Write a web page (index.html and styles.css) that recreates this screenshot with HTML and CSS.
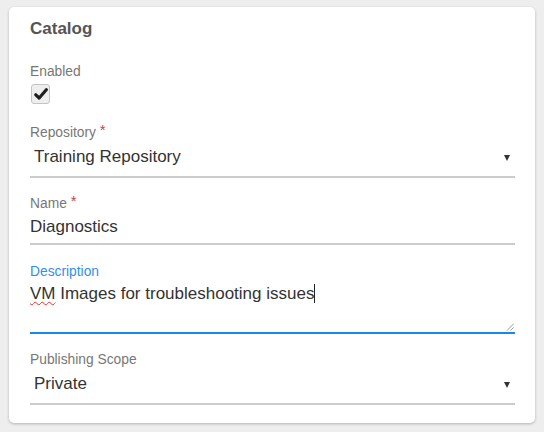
FILE: index.html
```html
<!DOCTYPE html>
<html>
<head>
<meta charset="utf-8">
<link rel="stylesheet" href="styles.css">
</head>
<body>
<div class="card">
  <h2 class="title">Catalog</h2>

  <div class="field field-check">
    <div class="label">Enabled</div>
    <div class="checkbox">
      <svg width="14" height="14" viewBox="0 0 14 14"><path d="M1.8 7.8 L5.2 11 L12.3 2.8" fill="none" stroke="#1e1e1e" stroke-width="3.2" stroke-linecap="round" stroke-linejoin="round"/></svg>
    </div>
  </div>

  <div class="field">
    <div class="label">Repository <span class="req">*</span></div>
    <div class="control select">
      <span class="value">Training Repository</span>
      <span class="arrow"></span>
    </div>
  </div>

  <div class="field field-name">
    <div class="label">Name <span class="req">*</span></div>
    <div class="control input">
      <span class="value">Diagnostics</span>
    </div>
  </div>

  <div class="field field-desc">
    <div class="label label-active">Description</div>
    <div class="control textarea">
      <span class="value"><span class="spell">VM</span> Images for troubleshooting issues<span class="caret"></span></span>
      <svg class="grip" width="8" height="8" viewBox="0 0 8 8"><path d="M7.5 1 L1 7.5 M7.5 4.5 L4.5 7.5" stroke="#999" stroke-width="1"/></svg>
    </div>
  </div>

  <div class="field">
    <div class="label">Publishing Scope</div>
    <div class="control select">
      <span class="value">Private</span>
      <span class="arrow"></span>
    </div>
  </div>
</div>
</body>
</html>
```

FILE: styles.css
```css
html, body {
  margin: 0;
  padding: 0;
}
body {
  background: #eeeeee;
  font-family: "Liberation Sans", Arial, sans-serif;
  width: 544px;
  height: 432px;
  overflow: hidden;
}
.card {
  box-sizing: border-box;
  margin: 7px 0 0 9px;
  width: 526px;
  height: 416px;
  background: #ffffff;
  border-radius: 5px;
  box-shadow: 0 1px 3px rgba(0, 0, 0, 0.25);
  padding: 12px 20px 0 21px;
}
.title {
  margin: 0;
  font-size: 17px;
  line-height: 20px;
  font-weight: bold;
  color: #555555;
}
.field {
  display: flex;
  flex-direction: column;
  margin-top: 18px;
}
.field-check {
  margin-top: 25px;
}
.field-name {
  margin-top: 15px;
}
.field-desc {
  margin-top: 19px;
}
.label {
  font-size: 13.8px;
  line-height: 16px;
  color: #777777;
}
.label-active {
  color: #2f8ff0;
}
.req {
  color: #b94a48;
  font-size: 15px;
  vertical-align: 2px;
}
.checkbox {
  box-sizing: border-box;
  width: 19px;
  height: 20px;
  margin: 4px 0 0 1px;
  border: 1px solid #c4c4c4;
  border-radius: 3px;
  background: #eeeeee;
  display: flex;
  align-items: center;
  justify-content: center;
}
.control {
  position: relative;
  box-sizing: border-box;
  display: flex;
  align-items: flex-start;
  border-bottom: 2px solid #cccccc;
  font-size: 17px;
  line-height: 20px;
  color: #333333;
}
.select {
  height: 37px;
  padding: 6px 5px 0 4px;
  justify-content: space-between;
}
.input {
  height: 33px;
  padding-top: 5px;
}
.textarea {
  height: 54px;
  padding-top: 4px;
  border-bottom-color: #1688f2;
}
.spell {
  text-decoration: underline wavy #e03030;
  text-decoration-thickness: 1px;
  text-underline-offset: 2px;
}
.caret {
  display: inline-block;
  width: 1px;
  height: 19px;
  background: #222;
  vertical-align: -4px;
}
.grip {
  position: absolute;
  right: 1px;
  bottom: 1px;
}
.arrow {
  width: 0;
  height: 0;
  border-left: 3.5px solid transparent;
  border-right: 3.5px solid transparent;
  border-top: 6px solid #333;
  margin-top: 8px;
}
```
